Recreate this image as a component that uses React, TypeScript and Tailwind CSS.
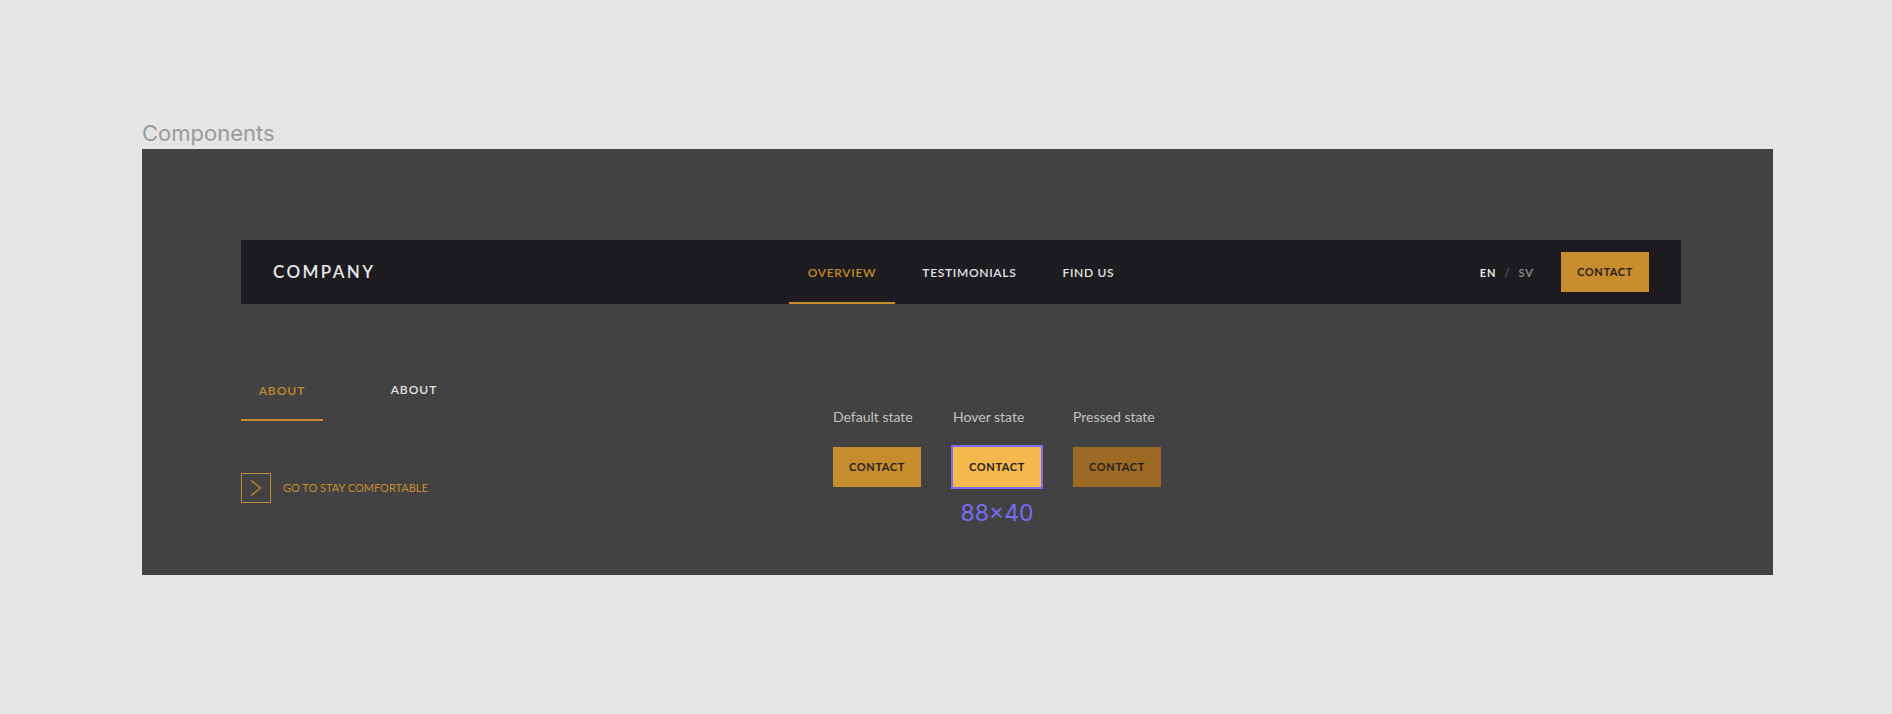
const lato = "font-['Lato','Liberation_Sans',sans-serif]";

function ContactButton({ tone = "default" }: { tone?: "default" | "hover" | "pressed" }) {
  const bg =
    tone === "hover" ? "bg-[#f5b84c] ring-2 ring-[#7b6cf6]" : tone === "pressed" ? "bg-[#9c6a25]" : "bg-[#c78c2e]";
  return (
    <div
      className={`${bg} flex h-[40px] w-[88px] items-center justify-center text-[11px] font-bold tracking-[0.6px] text-[#26221e]`}
    >
      CONTACT
    </div>
  );
}

function NavTab({ label, active }: { label: string; active?: boolean }) {
  return (
    <div
      className={`flex h-full items-center border-b-2 px-[19px] pt-[4px] text-[12px] font-semibold tracking-[0.7px] ${
        active ? "border-[#c78c2e] text-[#c78c2e]" : "border-transparent text-[#e4e4e4]"
      }`}
    >
      {label}
    </div>
  );
}

function Navbar() {
  return (
    <header className="grid h-[64px] w-[1440px] grid-cols-[1fr_auto_1fr] items-center bg-[#1d1c21]">
      <div className="pl-[32px] text-[17px] font-semibold tracking-[2.4px] text-[#e8e8e8]">COMPANY</div>
      <nav className="flex h-full gap-[8px]">
        <NavTab label="OVERVIEW" active />
        <NavTab label="TESTIMONIALS" />
        <NavTab label="FIND US" />
      </nav>
      <div className="flex items-center justify-end pr-[32px]">
        <div className="flex items-center pt-[3px] text-[11px] font-bold tracking-[1px]">
          <span className="text-[#e4e4e4]">EN</span>
          <span className="mx-[8px] font-normal text-[#6c6c6c]">/</span>
          <span className="text-[#8a8a8a]">SV</span>
        </div>
        <div className="ml-[27px]">
          <ContactButton />
        </div>
      </div>
    </header>
  );
}

function StateColumn({ label, tone }: { label: string; tone: "default" | "hover" | "pressed" }) {
  return (
    <div className="flex w-[88px] flex-col items-start">
      <div className="whitespace-nowrap text-[14px] leading-[20px] text-[#c2c2c2]">{label}</div>
      <div className="mt-[20px]">
        <ContactButton tone={tone} />
      </div>
      {tone === "hover" && (
        <div className="mt-[12px] w-full whitespace-nowrap text-center font-['Inter',sans-serif] text-[23px] leading-[28px] text-[#7b6cf6]">
          88×40
        </div>
      )}
    </div>
  );
}

export default function App() {
  return (
    <div className={`h-[714px] w-full bg-[#e5e5e5] pl-[142px] pt-[120px] ${lato}`}>
      <div className="mb-[3px] h-[26px] font-['Inter',sans-serif] text-[22px] leading-[26px] text-[#9a9a9a]">
        Components
      </div>
      <section className="h-[426px] w-[1631px] bg-[#424242] pl-[99px] pt-[91px]">
        <Navbar />
        <div className="flex">
          <div className="w-[592px] pt-[78px]">
            <div className="flex items-start">
              <div className="w-[82px] border-b-2 border-[#c78c2e] pb-[20px] pt-[1px] text-center text-[12px] font-semibold leading-[16px] tracking-[1px] text-[#c78c2e]">
                ABOUT
              </div>
              <div className="ml-[50px] w-[82px] text-center text-[12px] font-semibold leading-[16px] tracking-[1px] text-[#e4e4e4]">
                ABOUT
              </div>
            </div>
            <div className="mt-[52px] flex items-center gap-[12px]">
              <div className="flex h-[30px] w-[30px] items-center justify-center border border-[#c78c2e]">
                <svg width="30" height="30" viewBox="0 0 30 30" fill="none">
                  <path d="M9.7 7 L20 15 L9.7 23" stroke="#c78c2e" strokeWidth="1.3" />
                </svg>
              </div>
              <span className="text-[11px] text-[#c78c2e]">GO TO STAY COMFORTABLE</span>
            </div>
          </div>
          <div className="flex gap-[32px] pt-[103px]">
            <StateColumn label="Default state" tone="default" />
            <StateColumn label="Hover state" tone="hover" />
            <StateColumn label="Pressed state" tone="pressed" />
          </div>
        </div>
      </section>
    </div>
  );
}
